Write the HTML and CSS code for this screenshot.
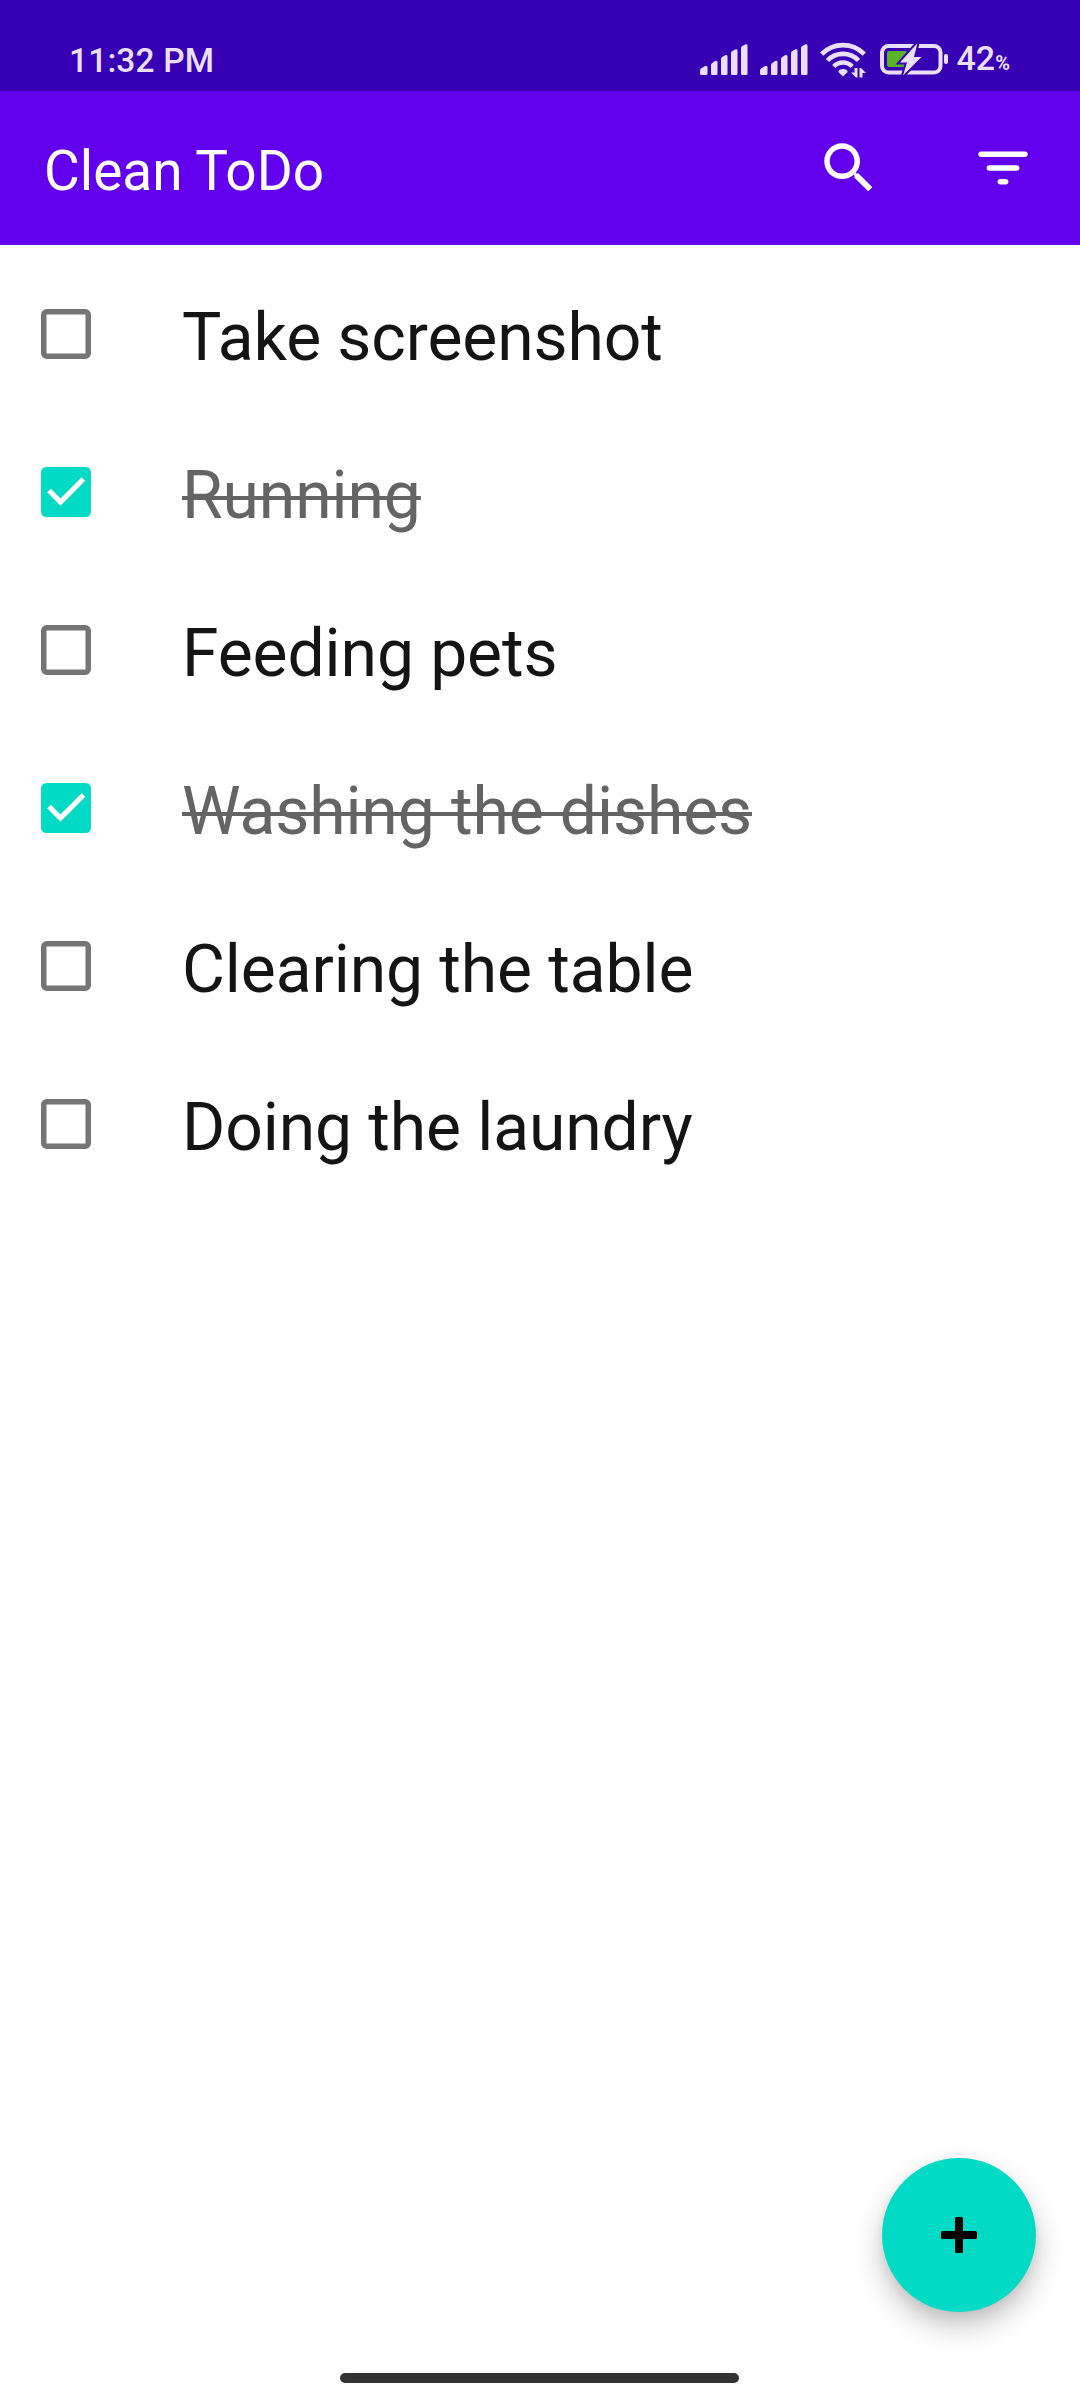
FILE: index.html
```html
<!DOCTYPE html>
<html lang="en">
<head>
<meta charset="utf-8">
<title>Clean ToDo</title>
<link rel="stylesheet" href="styles.css">
</head>
<body>
<div class="screen">
  <header class="status-bar">
    <span class="clock">11:32 PM</span>
    <div class="status-icons">
      <svg class="signal" viewBox="0 0 48 31" width="48" height="31"><g fill="currentColor"><path id="bars" d="M0 26.5Q0 25.500 1 24.500L5 22Q7.500 21.500 7.500 23V29.500Q7.500 31 6 31H1.500Q0 31 0 29.500ZM11 21Q11 20 12 19.200L15 17Q17.500 16 17.500 18V29.500Q17.500 31 16 31H12.500Q11 31 11 29.500ZM21 15Q21 14 22 13.200L25 11.300Q27.500 10.500 27.500 12.500V29.500Q27.500 31 26 31H22.500Q21 31 21 29.500ZM31 9Q31 8 32 7.200L35 5.500Q37.500 4.700 37.500 6.500V29.500Q37.500 31 36 31H32.500Q31 31 31 29.500ZM41 4Q41 3 42 2.200L45.500.3Q47.500-.2 47.500 1.500V29.500Q47.500 31 46 31H42.500Q41 31 41 29.500Z"/></g></svg>
      <svg class="signal" viewBox="0 0 48 31" width="48" height="31"><use href="#bars" fill="currentColor"/></svg>
      <svg class="wifi" viewBox="0 0 46 36" width="46" height="36">
        <g fill="none" stroke="currentColor" stroke-width="4.600"><path d="M1.700 12.200C13.500 .1 32.500 .1 44.300 12.200"/><path d="M7.500 18.500C16 9.700 30 9.700 38.500 18.500"/><path d="M13.800 24.500C19 19.200 27 19.200 32.200 24.500"/></g>
        <path fill="currentColor" d="M23 34.500L18.300 30C18.300 26 27.700 26 27.700 30ZM34.500 26H37.500V35.500H36L31 30.500H34.500ZM39.500 35.500V26H41L46 31H42.500V35.500Z"/>
      </svg>
      <svg class="battery" viewBox="0 0 69 31" width="69" height="31">
        <rect x="2" y="2" width="58.500" height="26.500" rx="6.500" fill="none" stroke="currentColor" stroke-width="4"/>
        <rect x="64" y="10" width="4" height="10" rx="2" fill="currentColor"/>
        <rect x="7" y="7" width="20" height="16" rx="2" fill="#58b327"/>
        <path d="M37.500-1L20 18.500H27L23 31.500L41.500 13H34Z" fill="currentColor" stroke="#3700b3" stroke-width="4" paint-order="stroke"/>
      </svg>
      <span class="level">42<small>%</small></span>
    </div>
  </header>
  <div class="app-bar">
    <h1 class="title">Clean ToDo</h1>
    <svg class="action" viewBox="0 0 24 24"><path fill="currentColor" d="M15.500 14h-.79l-.28-.27C15.410 12.590 16 11.110 16 9.500 16 5.910 13.090 3 9.500 3S3 5.910 3 9.500 5.910 16 9.500 16c1.610 0 3.090-.59 4.230-1.570l.27.28v.79l5 4.990L20.490 19l-4.990-5zm-6 0C7.010 14 5 11.990 5 9.500S7.010 5 9.500 5 14 7.010 14 9.500 11.990 14 9.500 14z"/></svg>
    <svg class="action" viewBox="0 0 24 24"><path fill="currentColor" d="M11 18h2c.55 0 1-.45 1-1s-.45-1-1-1h-2c-.55 0-1 .45-1 1s.45 1 1 1zM3 7c0 .55.45 1 1 1h16c.55 0 1-.45 1-1s-.45-1-1-1H4c-.55 0-1 .45-1 1zm4 6h10c.55 0 1-.45 1-1s-.45-1-1-1H7c-.55 0-1 .45-1 1s.45 1 1 1z"/></svg>
  </div>
  <main class="list">
    <div class="row"><svg class="box" viewBox="0 0 50 50"><rect id="empty" x="2.750" y="2.750" width="44.500" height="44.500" rx="3" fill="none" stroke="#757575" stroke-width="5.500"/></svg><span class="task">Take screenshot</span></div>
    <div class="row done"><svg class="box" viewBox="0 0 50 50"><g id="checked"><rect width="50" height="50" rx="5.500" fill="#03dac5"/><path d="M8 23.500L19.500 35L42.500 12" fill="none" stroke="#fff" stroke-width="5.200"/></g></svg><span class="task">Running</span></div>
    <div class="row"><svg class="box" viewBox="0 0 50 50"><use href="#empty"/></svg><span class="task">Feeding pets</span></div>
    <div class="row done"><svg class="box" viewBox="0 0 50 50"><use href="#checked"/></svg><span class="task">Washing the dishes</span></div>
    <div class="row"><svg class="box" viewBox="0 0 50 50"><use href="#empty"/></svg><span class="task">Clearing the table</span></div>
    <div class="row"><svg class="box" viewBox="0 0 50 50"><use href="#empty"/></svg><span class="task">Doing the laundry</span></div>
  </main>
  <button class="fab" aria-label="Add task"><svg viewBox="0 0 36 36" width="36" height="36"><path d="M15.500 0h5Q22 0 22 1.500V14H34.500Q36 14 36 15.500v5Q36 22 34.500 22H22V34.500Q22 36 20.500 36h-5Q14 36 14 34.500V22H1.500Q0 22 0 20.500v-5Q0 14 1.500 14H14V1.500Q14 0 15.500 0Z"/></svg></button>
  <div class="home-indicator"></div>
</div>
</body>
</html>
```
FILE: styles.css
```css
* { box-sizing: border-box; }
body { margin: 0; background: #fff; font-family: Roboto, sans-serif; }
.screen { width: 1080px; height: 2400px; display: flex; flex-direction: column; position: relative; }
svg { display: block; flex: none; }

.status-bar { height: 91px; padding: 30px 70px 0 69px; display: flex; justify-content: space-between; align-items: center; background: #3700b3; color: #ebdfff; }
.clock { font-size: 33.500px; font-weight: 500; line-height: 40px; letter-spacing: .15px; }
.status-icons { display: flex; align-items: center; }
.signal { margin-right: 12px; margin-top: -2px; }
.wifi { margin-right: 14px; margin-top: -2px; }
.battery { margin-right: 8px; margin-top: -2px; }
.level { font-size: 34px; font-weight: 500; line-height: 40px; white-space: nowrap; }
.level small { font-size: 20px; font-weight: 700; }

.app-bar { height: 154px; padding: 0 44px; display: flex; align-items: center; background: #6200ee; color: #fff; }
.title { margin: 6px auto 0 0; font-size: 55px; font-weight: 400; line-height: 64px; }
.action { width: 66px; height: 66px; margin-bottom: 1px; }
.action + .action { margin-left: 88px; }

.list { flex: 1; padding-top: 10px; }
.row { height: 158px; display: flex; align-items: center; padding-left: 41px; }
.box { width: 50px; height: 50px; }
.task { margin: 7px 0 0 91px; font-size: 66px; line-height: 78px; letter-spacing: -.1px; color: #141414; white-space: nowrap; }
.done .task { color: #646464; text-decoration: line-through; text-decoration-thickness: 4px; }

.fab { position: absolute; left: 882px; top: 2158px; width: 154px; height: 154px; border: 0; border-radius: 50%; background: #03dac5; display: grid; place-items: center; padding: 0; box-shadow: 0 14px 28px rgba(0,0,0,.24), 0 3px 12px rgba(0,0,0,.06); }
.home-indicator { width: 399px; height: 10px; margin: 0 0 17px 340px; border-radius: 5px; background: #333; }
```
